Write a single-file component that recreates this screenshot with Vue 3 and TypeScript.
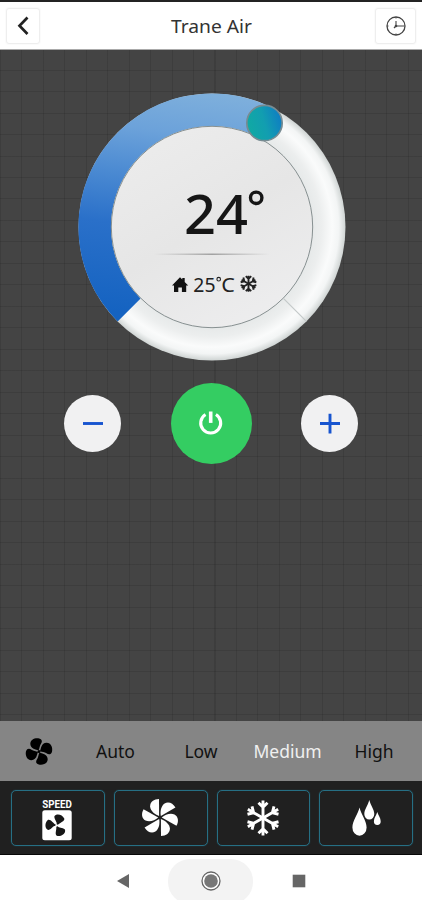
<script setup lang="ts">
import { ref } from 'vue'

type Mode = 'speed' | 'fan' | 'cool' | 'dry'

const target = ref<number>(24)
const room = ref<number>(25)
const speeds: string[] = ['Auto', 'Low', 'Medium', 'High']
const speed = ref<string>('Medium')
const modes: Mode[] = ['speed', 'fan', 'cool', 'dry']
const arms: number[] = [0, 60, 120, 180, 240, 300]
</script>

<template>
  <div class="screen">
    <header class="header">
      <button class="square back" aria-label="Back">
        <svg width="14" height="20" viewBox="0 0 14 20"><path d="M11.500 1.500 3.500 9.800l8 8.200" fill="none" stroke="#222" stroke-width="2.700" /></svg>
      </button>
      <h1 class="title"><svg width="84" height="28"><text x="1" y="19" textLength="81" lengthAdjust="spacingAndGlyphs">Trane Air</text></svg></h1>
      <button class="square clock" aria-label="Schedule">
        <svg width="22" height="22" viewBox="0 0 22 22" fill="none" stroke="#444">
          <circle cx="11" cy="11" r="9" stroke-width="1.300" />
          <path d="M11 6v5h8.500" stroke-width="1.100" />
          <path d="M11 2v1.500M11 18.500v1.500M2 11h1.500" stroke-width="1" />
          <path d="m9 13 2-2" stroke-width="1.200" />
          <circle cx="11" cy="11" r="1.300" fill="#444" stroke="none" />
        </svg>
      </button>
    </header>

    <main class="panel">
      <svg class="dial" width="272" height="272" viewBox="-136 -136 272 272">
        <defs>
          <linearGradient id="cold" gradientUnits="userSpaceOnUse" x1="15" y1="-134" x2="-15" y2="95">
            <stop offset="0" stop-color="#7fb0dc" />
            <stop offset=".2" stop-color="#6ca2da" />
            <stop offset=".4" stop-color="#4b8ad2" />
            <stop offset=".62" stop-color="#2a70c9" />
            <stop offset="1" stop-color="#1563c1" />
          </linearGradient>
          <radialGradient id="rim" gradientUnits="userSpaceOnUse" cx="0" cy="0" r="133.500">
            <stop offset=".75" stop-color="#e6e9e9" />
            <stop offset=".82" stop-color="#eceeee" />
            <stop offset=".9" stop-color="#fafbfb" />
            <stop offset=".95" stop-color="#f3f5f5" />
            <stop offset="1" stop-color="#cfd4d3" />
          </radialGradient>
          <linearGradient id="face" x1=".15" y1=".05" x2=".7" y2="1">
            <stop offset="0" stop-color="#ececec" />
            <stop offset=".5" stop-color="#e6e6e6" />
            <stop offset="1" stop-color="#ededee" />
          </linearGradient>
          <linearGradient id="knob" x1="0" y1=".65" x2="1" y2=".35">
            <stop offset="0" stop-color="#10aaa2" />
            <stop offset=".5" stop-color="#129eb0" />
            <stop offset="1" stop-color="#0e7cc4" />
          </linearGradient>
          <linearGradient id="rule" gradientUnits="userSpaceOnUse" x1="-58" y1="0" x2="58" y2="0">
            <stop offset="0" stop-color="#999" stop-opacity="0" />
            <stop offset=".5" stop-color="#909090" />
            <stop offset="1" stop-color="#999" stop-opacity="0" />
          </linearGradient>
        </defs>
        <circle r="133.500" fill="url(#rim)" />
        <path d="M-94.400 94.400A133.500 133.500 0 0 1 60.600-119L45.900-90A101 101 0 0 0-71.400 71.400Z" fill="url(#cold)" />
        <path d="M71.400 71.400 94.400 94.400" stroke="#c4c9c9" stroke-width="1.100" />
        <circle r="100.700" fill="url(#face)" stroke="#879091" stroke-width="1" />
        <circle cx="52.500" cy="-104" r="17.700" fill="url(#knob)" stroke="#778b92" stroke-width="1.700" />
        <text class="target" x="-28" y="6.500" textLength="64" lengthAdjust="spacingAndGlyphs">{{ target }}</text>
        <circle cx="44.200" cy="-29.200" r="5.700" fill="none" stroke="#161616" stroke-width="3.400" />
        <rect x="-58" y="26.600" width="116" height="1.200" fill="url(#rule)" />
        <path d="M-40 58.600-32 50.200l2.300 2.300v-1.400h2.400v4l3.500 3.500h-2v6.400h-4.300v-4.500h-3.600V65H-38v-6.400Z" fill="#111" />
        <text class="room" x="-18.700" y="65.200" textLength="22.200" lengthAdjust="spacingAndGlyphs">{{ room }}</text>
        <circle cx="6.700" cy="52.200" r="1.800" fill="none" stroke="#222" stroke-width="1.100" />
        <text class="room" x="9.300" y="65.200" textLength="13.600" lengthAdjust="spacingAndGlyphs">C</text>
        <g transform="translate(36.500 56.700)" fill="none" stroke="#222" stroke-width="1.900">
          <path v-for="a in arms" :key="a" :transform="`rotate(${a})`" d="M0 0v-8M-2.700-7.500 0-4.800 2.700-7.500" />
        </g>
      </svg>

      <div class="controls">
        <button class="round step" aria-label="Lower">
          <svg width="24" height="24" viewBox="0 0 24 24"><path d="M2 11.500h20" stroke="#1754cf" stroke-width="2.900" /></svg>
        </button>
        <button class="round power" aria-label="Power">
          <svg width="28" height="28" viewBox="0 0 28 28" fill="none" stroke="#fff" stroke-width="3.100">
            <path d="M8.500 4.500a10 10 0 1 0 10.400 0" /><path d="M13.700 1.500v11.400" stroke-width="3.600" />
          </svg>
        </button>
        <button class="round step" aria-label="Raise">
          <svg width="24" height="24" viewBox="0 0 24 24"><path d="M2 11.500h20M12 1.800v19.600" stroke="#1754cf" stroke-width="2.900" /></svg>
        </button>
      </div>
    </main>

    <section class="speeds">
      <svg width="30" height="30" viewBox="-15 -15.500 30 30">
        <path v-for="a in [0, 90, 180, 270]" :key="a" :transform="`rotate(${a})`" d="M-.5-1C-3-2.200-8.300-2.200-8.700-7.500-8.800-12-3.800-14 .2-13 3.700-12 3.200-9.200 1.800-7.500.6-5.600.6-3-.5-1Z" />
        <circle r="1.500" />
      </svg>
      <button v-for="s in speeds" :key="s" class="speed" :class="{ active: s === speed }" @click="speed = s">{{ s }}</button>
    </section>

    <section class="modes">
      <button v-for="m in modes" :key="m" class="mode" :aria-label="m">
        <svg v-if="m === 'speed'" width="40" height="50" viewBox="-1 -2 40 50">
          <text class="label" x="3.200" y="12.800" textLength="29.600" lengthAdjust="spacingAndGlyphs">SPEED</text>
          <rect x="3.300" y="15.300" width="29.400" height="30" rx="2.500" fill="#fff" />
          <g transform="translate(17.600 30.500)" fill="#171717">
            <path v-for="a in [20, 150, 275]" :key="a" :transform="`rotate(${a})`" d="M-.4-1.200C-.6-3.500-4-4.500-5.200-7.600-4.600-11.600 1.600-12.400 5-9 6-6.300 2.600-4.500.9-1Z" />
          </g>
        </svg>
        <svg v-else-if="m === 'fan'" width="42" height="42" viewBox="-20 -20.500 42 42" fill="#fff">
          <path v-for="a in arms" :key="a" :transform="`rotate(${a})`" d="M-.9-1.500-1-18.400C-6-18.400-10-15.500-9.900-11-9.500-6.500-5.200-3-.9-1.500Z" />
        </svg>
        <svg v-else-if="m === 'cool'" width="42" height="42" viewBox="-21 -21 42 42" fill="none" stroke="#fff" stroke-width="2.900">
          <path v-for="a in arms" :key="a" :transform="`rotate(${a})`" d="M0 0v-17.500M-4.500-15.300 0-10.800 4.500-15.300" />
        </svg>
        <svg v-else width="36" height="42" viewBox="0 0 36 42" fill="#fff">
          <path d="M11.500 10.500C13 17 18.600 24 18.600 30.500a7.100 8.300 0 0 1-14.200 0C4.400 24 10 17 11.500 10.500Z" />
          <path d="M21.300 3c1.200 5 5 9.500 5 14a5 5.500 0 0 1-10 0c0-4.500 3.800-9 5-14Z" />
          <path d="M29.300 15c.8 3 3.400 6 3.400 9.200a3.400 3.800 0 0 1-6.800 0c0-3.200 2.600-6.200 3.400-9.200Z" />
        </svg>
      </button>
    </section>

    <nav class="system">
      <svg class="key prev" width="14" height="16" viewBox="0 0 14 16"><path d="M13 1v14L1 8Z" fill="#666" /></svg>
      <span class="home"><svg width="22" height="22" viewBox="0 0 22 22"><circle cx="11" cy="11" r="9" fill="#fff" stroke="#666" stroke-width="1.300" /><circle cx="11" cy="11" r="6.800" fill="#777" /></svg></span>
      <svg class="key" width="14" height="14" viewBox="0 0 14 14"><rect x=".7" y=".7" width="12.600" height="12.600" fill="#666" /></svg>
    </nav>
  </div>
</template>

<style>
body { background: #fff; }
</style>

<style scoped>
.screen {
  width: 422px;
  height: 900px;
  display: flex;
  flex-direction: column;
  overflow: hidden;
  font-family: "Noto Sans", "Open Sans", sans-serif;
  color: #222;
}
button {
  margin: 0;
  padding: 0;
  border: 0;
  background: none;
  font: inherit;
  color: inherit;
  display: flex;
  align-items: center;
  justify-content: center;
  box-sizing: border-box;
}
svg { display: block; flex: none; }
.header {
  height: 50px;
  box-sizing: border-box;
  border-top: 2px solid #232323;
  border-bottom: 1px solid #aaa;
  background: #fff;
  display: flex;
  justify-content: space-between;
  padding: 6px 6px 0;
  flex: none;
}
.square {
  height: 36px;
  border: 1px solid #eee;
  border-radius: 3px;
  box-shadow: 0 0 2px #eee;
}
.back { width: 34px; }
.clock { width: 41px; }
.title { margin: 6px 0 0 9px; font-weight: 400; font-size: 18px; line-height: 28px; }
.title text { fill: #333; }
.panel {
  height: 671px;
  flex: none;
  background-color: #444;
  background-image:
    repeating-linear-gradient(90deg, rgba(0, 0, 0, .1) 0 1px, transparent 1px 21.450px),
    repeating-linear-gradient(180deg, transparent 0 19.600px, rgba(0, 0, 0, .1) 19.600px 20.600px, transparent 20.600px 21.480px);
  display: flex;
  flex-direction: column;
  align-items: center;
}
.dial { margin: 41px 0 0 1px; }
.target { font-size: 54.500px; font-weight: 500; fill: #161616; }
.room { font-size: 20px; fill: #222; }
.controls {
  width: 294px;
  display: flex;
  align-items: center;
  justify-content: space-between;
  margin-top: 20px;
}
.round { border-radius: 50%; }
.step { width: 57px; height: 57px; background: #f1f1f2; }
.power { width: 81px; height: 81px; background: #34cd62; }
.speeds {
  height: 60px;
  flex: none;
  background: #858585;
  display: grid;
  grid-template-columns: 78px 75px 96px 77px 96px;
  align-items: center;
  justify-items: center;
}
.speed { font-size: 17.500px; line-height: 24px; color: #111; }
.speed.active { color: #f0f0f0; }
.modes {
  height: 74px;
  flex: none;
  box-sizing: border-box;
  background: #202020;
  border-bottom: 1px solid #080808;
  display: grid;
  grid-template-columns: repeat(4, 1fr);
  gap: 9px;
  padding: 9px 9px 8px 11px;
}
.mode { border: 1.500px solid #266f84; border-radius: 5px; box-shadow: 0 0 1px #266f84; }
.label { font: 700 11px "Roboto", sans-serif; fill: #fff; }
.system {
  height: 45px;
  flex: none;
  box-sizing: border-box;
  padding-top: 4px;
  background: #fff;
  display: grid;
  grid-template-columns: 168px 85px 91px;
  grid-template-rows: 45px;
  align-items: center;
}
.key { justify-self: center; margin-bottom: 2px; }
.prev { margin-left: 77px; }
.home {
  height: 45px;
  border-radius: 22px;
  background: #f3f3f3;
  display: flex;
  align-items: center;
  justify-content: center;
}
.home svg { margin-bottom: 2px; }
</style>
